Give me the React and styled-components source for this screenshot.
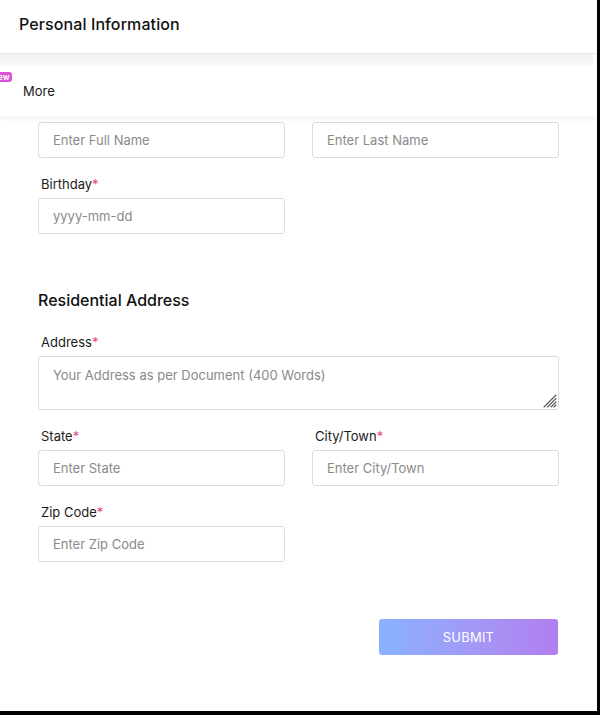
import React from "react";
import styled, { createGlobalStyle } from "styled-components";

const GlobalStyle = createGlobalStyle`
  html, body {
    margin: 0;
    padding: 0;
    background: #000;
  }
  body {
    font-family: Inter, "Noto Sans", "Liberation Sans", sans-serif;
    color: #1d1d1f;
  }
`;

const Panel = styled.div`
  position: relative;
  width: 597px;
  height: 711px;
  background: #fff;
  overflow: hidden;
`;

const Header = styled.div`
  box-sizing: border-box;
  height: 54px;
  padding: 14px 0 0 19px;
  border-bottom: 1px solid #e6e6e6;
`;

const Title = styled.h1`
  margin: 0;
  font-size: 16px;
  line-height: 20px;
  font-weight: 500;
  letter-spacing: 0.1px;
  color: #111;
`;

// dropdown that lies over the top of the form
const MoreMenu = styled.div`
  position: absolute;
  top: 54px;
  left: 0;
  right: 1px;
  z-index: 5;
  background: #fff;
  box-shadow: 0 3px 5px rgba(0, 0, 0, 0.05);
`;

const MenuStrip = styled.div`
  height: 12px;
  background: linear-gradient(#f2f2f2, #f8f8f8);
  margin-right: 3px;
`;

const MenuItem = styled.div`
  position: relative;
  height: 50px;
  display: flex;
  align-items: center;
  padding-left: 23px;
  font-size: 13px;
  color: #1a1a1a;
`;

const Badge = styled.span`
  position: absolute;
  top: 6px;
  left: -10px;
  background: #e04fd8;
  color: #fff;
  font-size: 8px;
  font-weight: 700;
  line-height: 10px;
  padding: 0 3px;
  border-radius: 3px;
`;

const Form = styled.form`
  padding: 46px 39px 0 38px;
`;

const Row = styled.div`
  display: grid;
  grid-template-columns: 247px 247px;
  column-gap: 27px;
`;

const Field = styled.div`
  display: flex;
  flex-direction: column;
  margin-bottom: 18px;
  width: ${({ $full }) => ($full ? "521px" : "247px")};
`;

const Label = styled.label`
  font-size: 13px;
  line-height: 16px;
  color: #1a1a1a;
  padding-left: 3px;
  margin-bottom: 6px;

  span {
    color: #e8457a;
  }
`;

const Input = styled.input`
  box-sizing: border-box;
  height: 36px;
  width: 100%;
  border: 1px solid #dcdcdc;
  border-radius: 3px;
  padding: 0 14px;
  font-family: inherit;
  font-size: 13px;
  color: #222;
  outline: none;

  &::placeholder {
    color: #8a8a8a;
  }
`;

const AreaWrap = styled.div`
  position: relative;
  height: 54px;
`;

const TextArea = styled.textarea`
  box-sizing: border-box;
  display: block;
  height: 54px;
  width: 100%;
  border: 1px solid #dcdcdc;
  border-radius: 3px;
  padding: 10px 14px;
  font-family: inherit;
  font-size: 13px;
  line-height: 16px;
  color: #222;
  outline: none;
  resize: none;

  &::placeholder {
    color: #8a8a8a;
  }
`;

const Grip = styled.svg`
  position: absolute;
  right: 2px;
  bottom: 2px;
  pointer-events: none;
`;

const SectionTitle = styled.h2`
  margin: 56px 0 24px;
  font-size: 16px;
  line-height: 20px;
  font-weight: 500;
  color: #111;
`;

const Actions = styled.div`
  display: flex;
  justify-content: flex-end;
  padding-top: 39px;
`;

const SubmitButton = styled.button`
  width: 179px;
  height: 36px;
  border: none;
  border-radius: 3px;
  background: linear-gradient(90deg, #88b2ff 0%, #a497f5 55%, #b17ef0 100%);
  color: #fff;
  font-family: inherit;
  font-size: 13px;
  letter-spacing: 0.2px;
  cursor: pointer;
`;

const Req = () => <span>*</span>;

const App = () => {
  return (
    <>
      <GlobalStyle />
      <Panel>
        <Header>
          <Title>Personal Information</Title>
        </Header>

        <MoreMenu>
          <MenuStrip />
          <MenuItem>
            <Badge>new</Badge>
            More
          </MenuItem>
        </MoreMenu>

        <Form onSubmit={(e) => e.preventDefault()}>
          <Row>
            <Field>
              <Label>First Name<Req /></Label>
              <Input placeholder="Enter Full Name" />
            </Field>
            <Field>
              <Label>Last Name<Req /></Label>
              <Input placeholder="Enter Last Name" />
            </Field>
          </Row>
          <Field>
            <Label>Birthday<Req /></Label>
            <Input placeholder="yyyy-mm-dd" />
          </Field>

          <SectionTitle>Residential Address</SectionTitle>

          <Field $full>
            <Label>Address<Req /></Label>
            <AreaWrap>
              <TextArea placeholder="Your Address as per Document (400 Words)" />
              <Grip width="14" height="14" viewBox="0 0 14 14">
                <g stroke="#555" strokeWidth="1.1" strokeLinecap="round">
                  <line x1="13" y1="1" x2="1" y2="13" />
                  <line x1="13" y1="4.5" x2="4.5" y2="13" />
                  <line x1="13" y1="8" x2="8" y2="13" />
                  <line x1="13" y1="11" x2="11" y2="13" />
                </g>
              </Grip>
            </AreaWrap>
          </Field>
          <Row>
            <Field>
              <Label>State<Req /></Label>
              <Input placeholder="Enter State" />
            </Field>
            <Field>
              <Label>City/Town<Req /></Label>
              <Input placeholder="Enter City/Town" />
            </Field>
          </Row>
          <Field>
            <Label>Zip Code<Req /></Label>
            <Input placeholder="Enter Zip Code" />
          </Field>

          <Actions>
            <SubmitButton type="submit">SUBMIT</SubmitButton>
          </Actions>
        </Form>
      </Panel>
    </>
  );
};

export default App;
